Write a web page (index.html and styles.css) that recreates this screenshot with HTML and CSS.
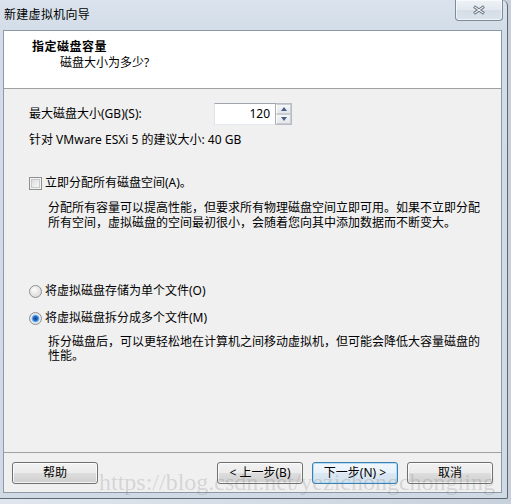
FILE: index.html
```html
<!DOCTYPE html>
<html lang="zh-CN">
<head>
<meta charset="utf-8">
<title>新建虚拟机向导</title>
<link rel="stylesheet" href="styles.css">
</head>
<body>
<div class="desktop">
  <div class="window">
    <div class="titlebar">
      <span class="title">新建虚拟机向导</span>
      <div class="close">
        <svg width="14" height="10" viewBox="0 0 14 10">
          <path d="M2 1.5 L12 8.5 M12 1.5 L2 8.5" stroke="#6c7886" stroke-width="3.2" fill="none"/>
          <path d="M2.6 1.9 L11.4 8.1 M11.4 1.9 L2.6 8.1" stroke="#ffffff" stroke-width="1.1" fill="none"/>
        </svg>
      </div>
    </div>
    <div class="client">
      <div class="header">
        <div class="h-title">指定磁盘容量</div>
        <div class="h-sub">磁盘大小为多少?</div>
      </div>
      <div class="body">
        <div class="size-row">
          <span class="size-label">最大磁盘大小(GB)(S):</span>
          <div class="spin">
            <div class="spin-input">120</div>
            <div class="spin-btns">
              <span class="spin-btn"><span class="tri-up"></span></span>
              <span class="spin-btn"><span class="tri-down"></span></span>
            </div>
          </div>
        </div>
        <div class="rec">针对 VMware ESXi 5 的建议大小: 40 GB</div>
        <div class="opt-row check-row"><span class="checkbox"></span><span>立即分配所有磁盘空间(A)。</span></div>
        <p class="desc desc-a">分配所有容量可以提高性能，但要求所有物理磁盘空间立即可用。如果不立即分配<br>所有空间，虚拟磁盘的空间最初很小，会随着您向其中添加数据而不断变大。</p>
        <div class="opt-row radio-row1"><span class="radio"></span><span>将虚拟磁盘存储为单个文件(O)</span></div>
        <div class="opt-row radio-row2"><span class="radio checked"></span><span>将虚拟磁盘拆分成多个文件(M)</span></div>
        <p class="desc desc-b">拆分磁盘后，可以更轻松地在计算机之间移动虚拟机，但可能会降低大容量磁盘的<br>性能。</p>
      </div>
      <div class="footer">
        <div class="btn">帮助</div>
        <div class="btn-group">
          <div class="btn">&lt; 上一步(B)</div>
          <div class="btn default">下一步(N) &gt;</div>
          <div class="btn">取消</div>
        </div>
      </div>
    </div>
  </div>
  <div class="watermark">https://blog.csdn.net/yezichongchongling</div>
</div>
</body>
</html>
```
FILE: styles.css
```css
* { box-sizing: border-box; }
html, body {
  margin: 0;
  padding: 0;
  width: 511px;
  height: 504px;
  overflow: hidden;
}
body {
  background: #cfd6de;
  font-family: "Noto Sans", "Noto Sans CJK SC", sans-serif;
  font-size: 12px;
  color: #000;
}
.desktop {
  position: relative;
  width: 511px;
  height: 504px;
  background: linear-gradient(90deg, #dfe6ee 0, #c8d1db 100%);
}
.window {
  width: 508px;
  height: 499px;
  display: flex;
  flex-direction: column;
  background: linear-gradient(180deg, #dae3ed 0, #d3dde8 30px, #d0dae5 100%);
  border-right: 1px solid #5d6874;
  border-bottom: 1px solid #5d6874;
  border-top-right-radius: 6px;
  border-bottom-right-radius: 2px;
  padding: 0 5px 5px 3px;
}
.titlebar {
  height: 30px;
  display: flex;
  align-items: flex-start;
  justify-content: space-between;
  flex: none;
}
.title {
  margin-top: 7px;
  margin-left: 1px;
  line-height: 16px;
  font-size: 12px;
  color: #000;
  letter-spacing: 0.3px;
}
.close {
  width: 48px;
  height: 21px;
  margin-right: -1px;
  border: 1px solid #7f8b99;
  border-top: none;
  border-bottom-left-radius: 4px;
  border-bottom-right-radius: 4px;
  background: linear-gradient(180deg, #eef2f6 0, #e2e8ef 50%, #d5dde6 51%, #dbe3eb 100%);
  box-shadow: inset 0 0 0 1px rgba(255,255,255,0.6);
  display: flex;
  align-items: center;
  justify-content: center;
}
.close svg { display: block; margin-top: -1px; }
.client {
  flex: 1;
  display: flex;
  flex-direction: column;
  border: 1px solid #8d99a6;
  background: #f0f0f0;
}
.header {
  height: 58px;
  background: #fff;
  border-bottom: 1px solid #a0a0a0;
  padding: 8px 0 0 28px;
  flex: none;
}
.h-title {
  font-weight: bold;
  line-height: 16px;
  font-size: 12px;
  letter-spacing: 0.5px;
}
.h-sub {
  margin-left: 28px;
  line-height: 16px;
}
.body {
  flex: 1;
  padding: 14px 0 0 25px;
}
.size-row {
  display: flex;
  align-items: center;
  height: 22px;
}
.size-label {
  width: 185px;
  line-height: 16px;
}
.spin {
  display: flex;
  height: 22px;
}
.spin-input {
  width: 62px;
  height: 22px;
  background: #fff;
  border: 1px solid #abadb3;
  border-top-color: #a1a5ad;
  border-bottom-color: #e3e9ef;
  border-left-color: #e2e3ea;
  text-align: right;
  padding-right: 5px;
  line-height: 20px;
  color: #000;
}
.spin-btns {
  width: 16px;
  display: flex;
  flex-direction: column;
  border: 1px solid #b7bcc4;
  border-left: none;
}
.spin-btn {
  flex: 1;
  display: flex;
  align-items: center;
  justify-content: center;
  background: linear-gradient(180deg, #f5f6f8, #e3e6ea);
  border: 1px solid #c9cdd3;
  border-left-color: #fff;
}
.tri-up {
  width: 0; height: 0;
  border-left: 3.5px solid transparent;
  border-right: 3.5px solid transparent;
  border-bottom: 4px solid #4a5f86;
}
.tri-down {
  width: 0; height: 0;
  border-left: 3.5px solid transparent;
  border-right: 3.5px solid transparent;
  border-top: 4px solid #4a5f86;
}
.rec {
  margin-top: 7px;
  line-height: 16px;
}
.opt-row {
  display: flex;
  align-items: center;
  line-height: 16px;
  height: 16px;
}
.check-row { margin-top: 27px; }
.radio-row1 { margin-top: 53px; }
.radio-row2 { margin-top: 11px; }
.checkbox {
  width: 13px;
  height: 13px;
  margin-right: 3px;
  border: 1px solid #8e8f8f;
  background: linear-gradient(135deg, #d5d5d5 0, #eeeeee 60%, #fbfbfb 100%);
  box-shadow: inset 0 0 0 1px #f4f4f4, inset 0 0 0 2px #c9c9c9;
  flex: none;
}
.radio {
  width: 13px;
  height: 13px;
  margin-right: 3px;
  border-radius: 50%;
  border: 1px solid #8e8f8f;
  background: radial-gradient(circle at 40% 35%, #fdfdfd 0, #e3e3e3 55%, #cfcfcf 100%);
  flex: none;
}
.radio.checked {
  background: radial-gradient(circle at 50% 50%, #0d3b86 0, #2b6cc4 2.2px, #7cc0f2 3.6px, #e9eef3 4.3px, #d8d8d8 100%);
}
.desc {
  margin: 0;
  padding-left: 19px;
}
.desc-a {
  margin-top: 9px;
  line-height: 15px;
}
.desc-b {
  margin-top: 9px;
  line-height: 14px;
}
.footer {
  flex: none;
  height: 40px;
  border-top: 1px solid #a0a0a0;
  padding: 9px 8px 8px 8px;
  display: flex;
  justify-content: space-between;
}
.btn-group {
  display: flex;
  gap: 9px;
}
.btn {
  width: 86px;
  height: 22px;
  border: 1px solid #707070;
  border-radius: 3px;
  background: linear-gradient(180deg, #f2f2f2 0, #ebebeb 50%, #dddddd 51%, #cfcfcf 100%);
  box-shadow: inset 0 0 0 1px rgba(255,255,255,0.75);
  display: flex;
  align-items: center;
  justify-content: center;
  line-height: 16px;
  color: #000;
}
.btn.default {
  border-color: #3c7fb1;
  background: linear-gradient(180deg, #f1f7fc 0, #e8f1f9 50%, #dbe8f3 51%, #d3e2ee 100%);
  box-shadow: inset 0 0 0 1px #b5dcf7;
}
.watermark {
  position: absolute;
  left: 99px;
  top: 470px;
  font-family: "Liberation Serif", serif;
  font-size: 24px;
  line-height: 24px;
  color: rgba(120, 120, 120, 0.24);
  white-space: nowrap;
  pointer-events: none;
}
```
